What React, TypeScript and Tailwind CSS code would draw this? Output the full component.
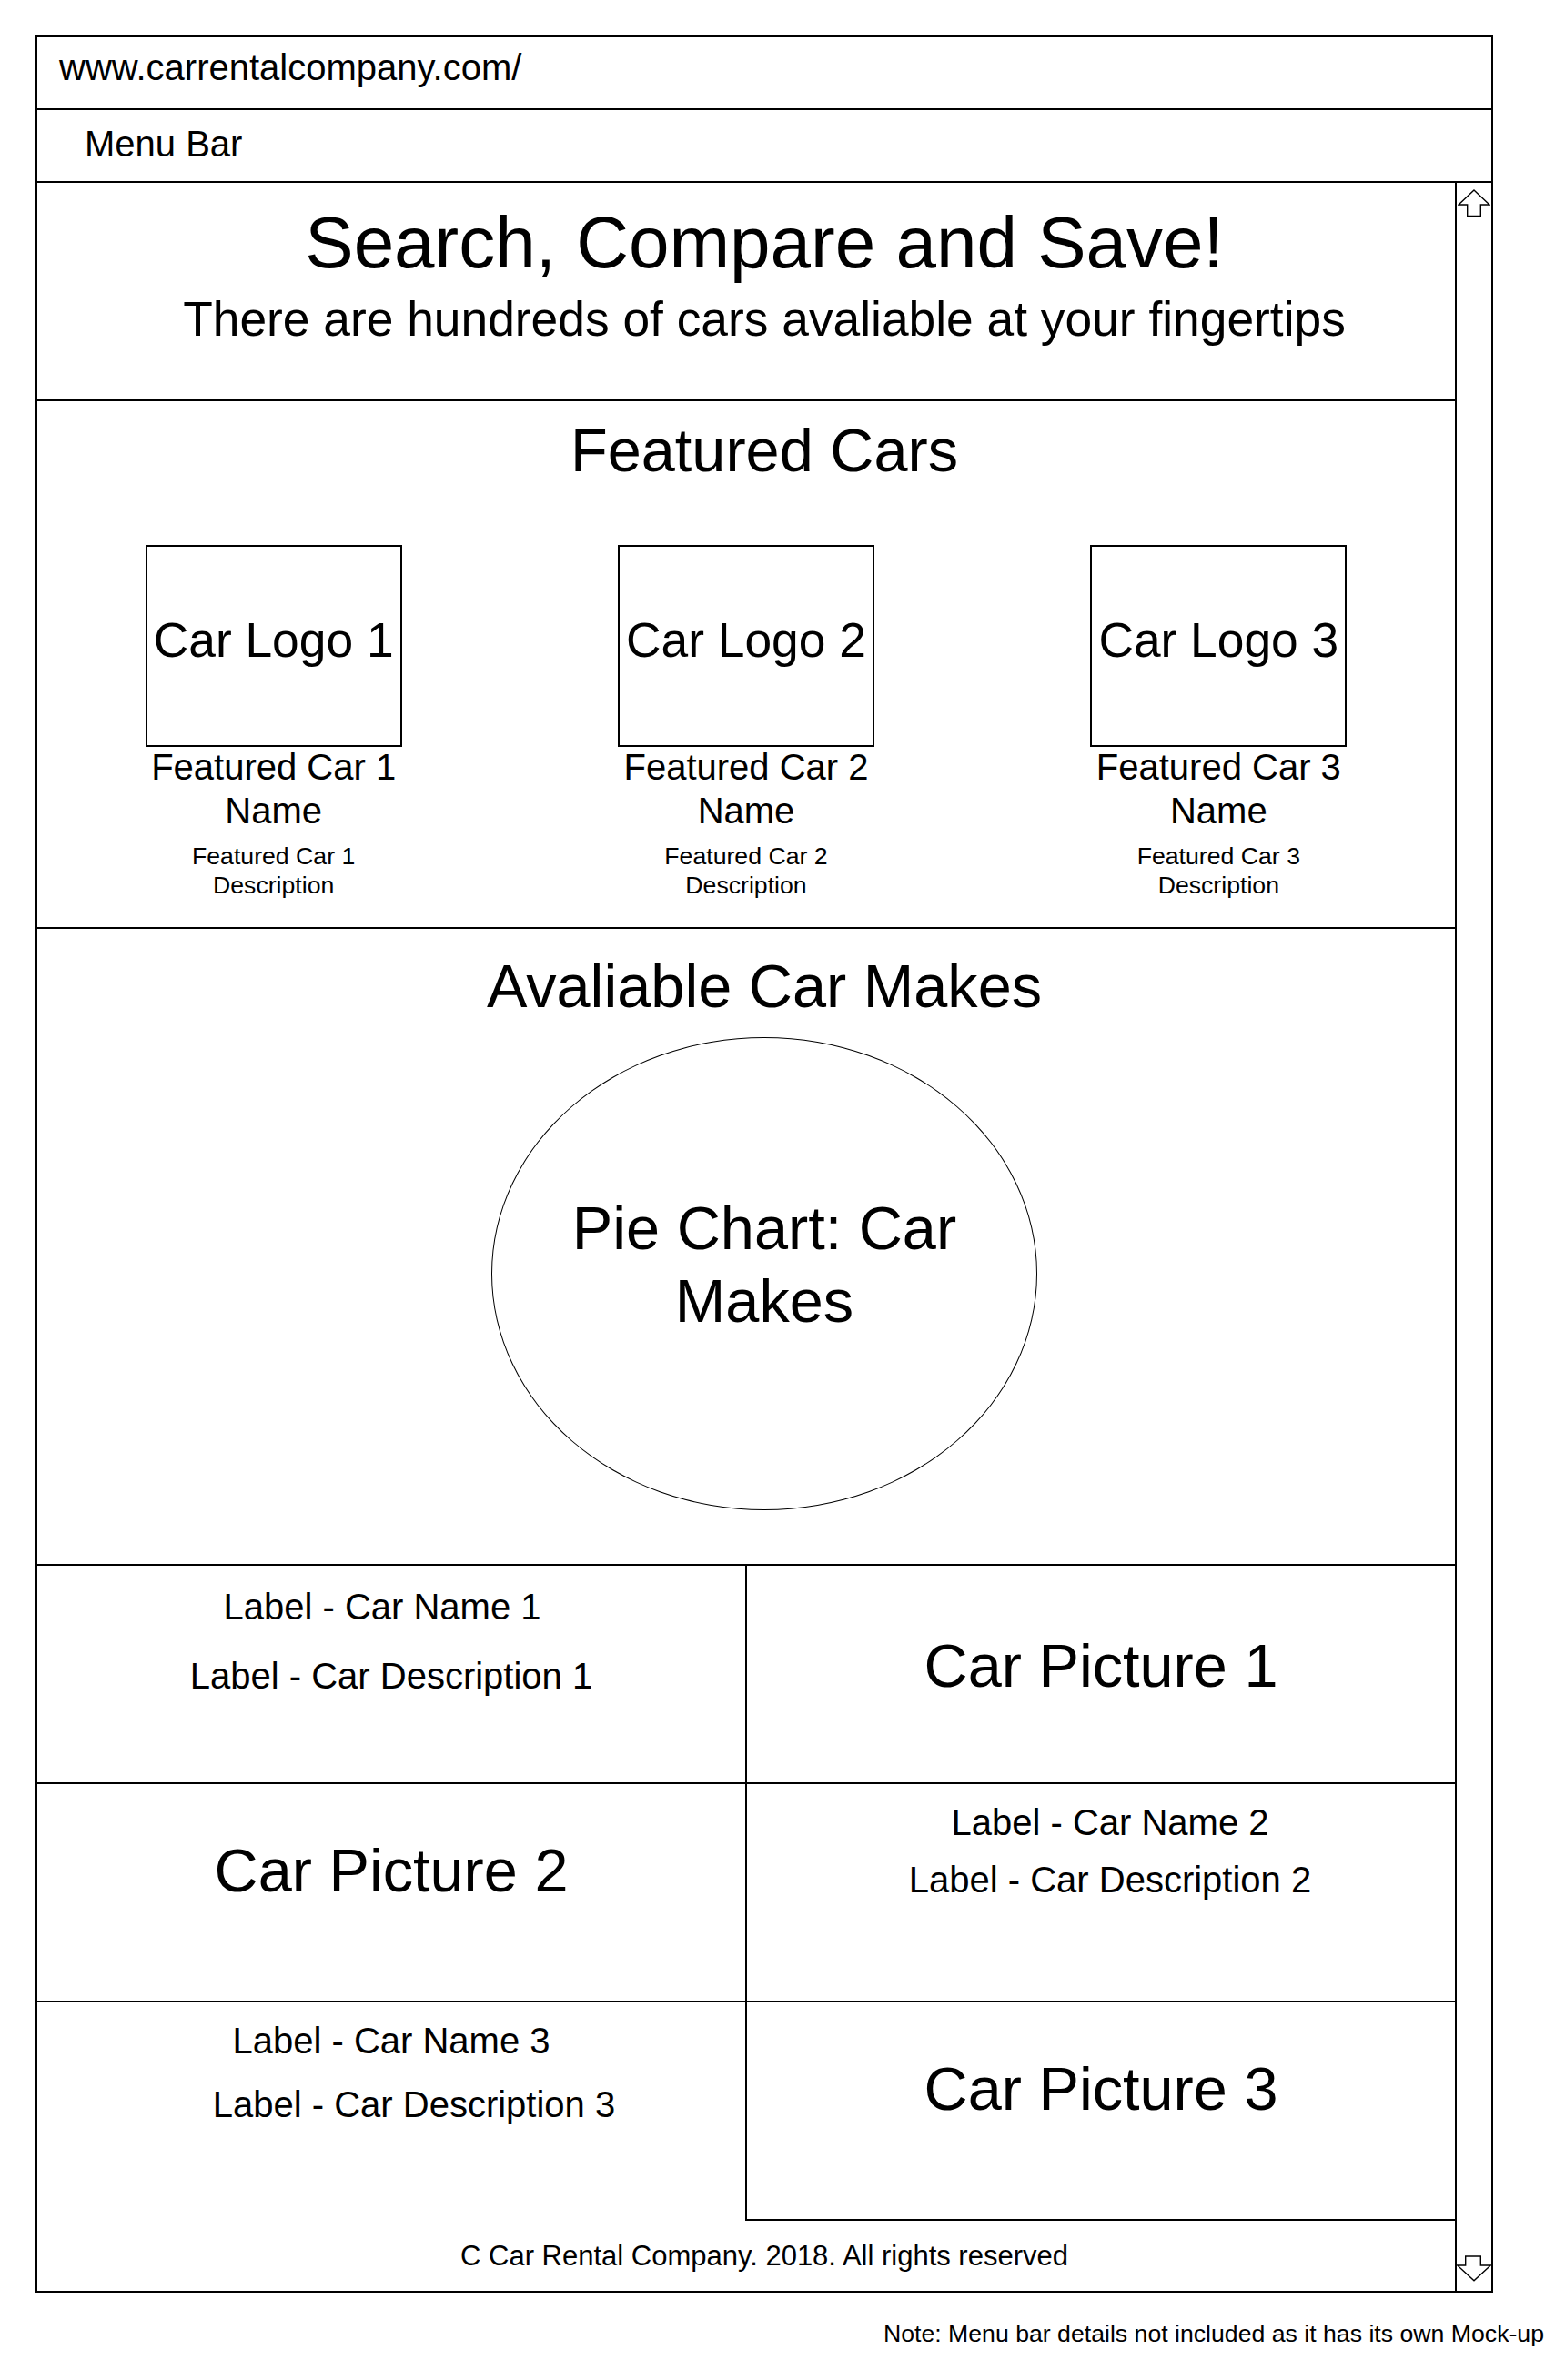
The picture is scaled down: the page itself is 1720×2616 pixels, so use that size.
function ArrowUp() {
  return (
    <svg width="36" height="30" viewBox="0 0 36 30" className="block">
      <path d="M18 1 L35 17 L25.3 17 L25.3 29.5 L10.7 29.5 L10.7 17 L1 17 Z" fill="white" stroke="black" strokeWidth="1.4" />
    </svg>
  )
}

function ArrowDown() {
  return (
    <svg width="38" height="29" viewBox="0 0 38 29" className="block">
      <path d="M9.7 1 L26.3 1 L26.3 11 L37.3 11 L19 27.8 L0.7 11 L9.7 11 Z" fill="white" stroke="black" strokeWidth="1.4" />
    </svg>
  )
}

function FeaturedCar({ n }: { n: number }) {
  return (
    <div className="flex flex-col items-center">
      <div className="w-[282px] h-[222px] border-2 border-black flex items-center justify-center pb-3 text-[53.33px] leading-[64px] whitespace-nowrap">
        Car Logo {n}
      </div>
      <div className="w-[282px] -mt-0.5 text-center text-[40px] leading-[48px]">Featured Car {n} Name</div>
      <div className="w-[282px] mt-[10px] text-center text-[26.67px] leading-[32px]">Featured Car {n} Description</div>
    </div>
  )
}

export default function App() {
  return (
    <div className="min-h-[2616px] bg-white text-black font-['Liberation_Sans',Arial,sans-serif] pt-[39px]">
      <div className="ml-[39px] w-[1602px] h-[2481px] border-2 border-black flex flex-col">
        {/* browser chrome */}
        <div className="h-[80px] shrink-0 border-b-2 border-black pl-6 pt-[9px] text-[40px] leading-[48px]">
          www.carrentalcompany.com/
        </div>
        <div className="h-[80px] shrink-0 border-b-2 border-black pl-[52px] pt-[13px] text-[40px] leading-[48px]">
          Menu Bar
        </div>

        <div className="flex flex-1 min-h-0">
          <div className="flex-1 min-w-0 flex flex-col">
            {/* hero */}
            <section className="h-[240px] shrink-0 border-b-2 border-black">
              <div className="-mr-10 pt-[18px] text-center">
                <h1 className="text-[80px] leading-[96px]">Search, Compare and Save!</h1>
                <p className="mt-1 text-[53.33px] leading-[64px]">There are hundreds of cars avaliable at your fingertips</p>
              </div>
            </section>

            {/* featured */}
            <section className="h-[580px] shrink-0 border-b-2 border-black">
              <h2 className="-mr-10 pt-[14px] text-center text-[66.67px] leading-[80px]">Featured Cars</h2>
              <div className="grid grid-cols-3 mt-[64px]">
                <FeaturedCar n={1} />
                <FeaturedCar n={2} />
                <FeaturedCar n={3} />
              </div>
            </section>

            {/* makes */}
            <section className="h-[700px] shrink-0 border-b-2 border-black">
              <div className="-mr-10 pt-[23px] flex flex-col items-center">
                <h2 className="text-[66.67px] leading-[80px]">Avaliable Car Makes</h2>
                <div className="mt-4 w-[600px] h-[520px] rounded-[50%] border-[1.5px] border-black flex items-center justify-center pb-5 text-center text-[66.67px] leading-[80px]">
                  Pie Chart: Car Makes
                </div>
              </div>
            </section>

            {/* car rows */}
            <div className="h-[240px] shrink-0 border-b-2 border-black grid grid-cols-[778px_1fr]">
              <div className="pt-[21px] text-center text-[40px] leading-[48px]">
                <div className="pr-5">Label - Car Name 1</div>
                <div className="mt-[28px]">Label - Car Description 1</div>
              </div>
              <div className="border-l-2 border-black pt-[70px] text-center text-[66.67px] leading-[80px]">Car Picture 1</div>
            </div>

            <div className="h-[240px] shrink-0 border-b-2 border-black grid grid-cols-[778px_1fr]">
              <div className="pt-[55px] text-center text-[66.67px] leading-[80px]">Car Picture 2</div>
              <div className="border-l-2 border-black pt-[18px] text-center text-[40px] leading-[48px]">
                <div className="pl-5">Label - Car Name 2</div>
                <div className="pl-5 mt-[15px]">Label - Car Description 2</div>
              </div>
            </div>

            <div className="h-[240px] shrink-0 grid grid-cols-[778px_1fr]">
              <div className="pt-[18px] text-center text-[40px] leading-[48px]">
                <div>Label - Car Name 3</div>
                <div className="pl-[50px] mt-[22px]">Label - Car Description 3</div>
              </div>
              <div className="border-l-2 border-b-2 border-black pt-[55px] text-center text-[66.67px] leading-[80px]">Car Picture 3</div>
            </div>

            {/* footer */}
            <footer className="flex-1">
              <p className="-mr-10 pt-5 text-center text-[31px] leading-[37px]">C Car Rental Company. 2018. All rights reserved</p>
            </footer>
          </div>

          {/* scrollbar */}
          <div className="w-[40px] shrink-0 border-l-2 border-black flex flex-col items-center justify-between pt-[7px] pb-[10px]">
            <ArrowUp />
            <ArrowDown />
          </div>
        </div>
      </div>

      <p className="mt-[29px] pr-[23px] text-right text-[26.67px] leading-[32px]">
        Note: Menu bar details not included as it has its own Mock-up
      </p>
    </div>
  )
}
